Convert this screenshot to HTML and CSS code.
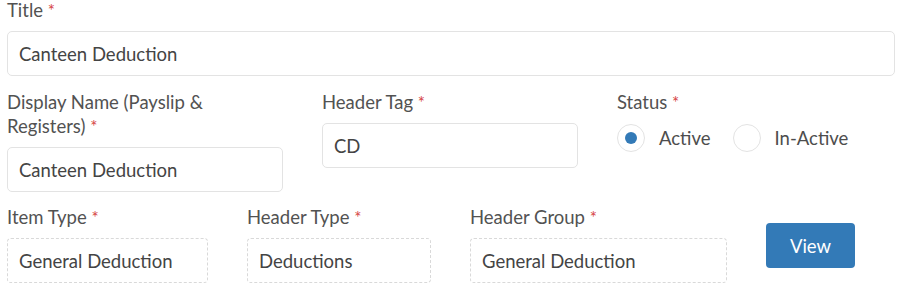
FILE: index.html
```html
<!DOCTYPE html>
<html lang="en">
<head>
    <meta charset="UTF-8">
    <title>Pay Header</title>
    <link rel="stylesheet" href="styles.css">
</head>
<body>
<form class="form">
    <div class="row">
        <div class="field field-full">
            <label class="label" for="title">Title <span class="req">*</span></label>
            <input class="input" id="title" type="text" value="Canteen Deduction">
        </div>
    </div>

    <div class="row row-two">
        <div class="field w-display">
            <label class="label" for="display-name"><span>Display Name (Payslip &amp;</span> <span>Registers)</span> <span class="req">*</span></label>
            <input class="input" id="display-name" type="text" value="Canteen Deduction">
        </div>
        <div class="field w-tag">
            <label class="label" for="header-tag">Header Tag <span class="req">*</span></label>
            <input class="input" id="header-tag" type="text" value="CD">
        </div>
        <div class="field">
            <span class="label">Status <span class="req">*</span></span>
            <div class="radios">
                <label class="radio"><span class="dot checked"></span>Active</label>
                <label class="radio"><span class="dot"></span>In-Active</label>
            </div>
        </div>
    </div>

    <div class="row row-three">
        <div class="field w-item">
            <span class="label">Item Type <span class="req">*</span></span>
            <div class="input readonly">General Deduction</div>
        </div>
        <div class="field w-htype">
            <span class="label">Header Type <span class="req">*</span></span>
            <div class="input readonly">Deductions</div>
        </div>
        <div class="field w-group">
            <span class="label">Header Group <span class="req">*</span></span>
            <div class="input readonly">General Deduction</div>
        </div>
        <button class="btn-view" type="button">View</button>
    </div>
</form>
</body>
</html>
```

FILE: styles.css
```css
body {
    margin: 0;
    background: #fff;
    font-family: Lato, "Noto Sans", sans-serif;
    color: #4d4d4d;
}

.form {
    padding: 0 8px 0 7px;
    margin-top: -2px;
}

.row {
    display: flex;
    align-items: flex-start;
}

.row-two {
    margin-top: 14px;
    gap: 39px;
}

.row-three {
    margin-top: 13px;
    gap: 39px;
}

.field {
    display: flex;
    flex-direction: column;
}

.field-full {
    width: 100%;
}

.w-display { width: 276px; }
.w-tag { width: 256px; }
.w-item { width: 201px; }
.w-htype { width: 184px; }
.w-group { width: 257px; }

.label {
    font-size: 18.5px;
    line-height: 24px;
    color: #525252;
    margin-bottom: 9px;
}

.w-display .label {
    padding-right: 40px;
}

.req {
    color: #d64545;
    font-size: 17px;
    line-height: 1;
}

.input {
    box-sizing: border-box;
    height: 45px;
    width: 100%;
    border: 1px solid #e3e3e3;
    border-radius: 5px;
    padding: 0 11px;
    font-family: inherit;
    font-size: 18.5px;
    color: #444;
    background: #fff;
    outline: none;
}

.readonly {
    display: flex;
    align-items: center;
    border: 1px dashed #d9d9d9;
    border-radius: 4px;
}

.radios {
    display: flex;
    align-items: center;
    height: 28px;
    margin-top: 1px;
}

.radio {
    display: flex;
    align-items: center;
    font-size: 18.5px;
    color: #4d4d4d;
    margin-right: 22px;
}

.dot {
    box-sizing: border-box;
    width: 28px;
    height: 28px;
    border: 1px solid #e3e3e3;
    border-radius: 50%;
    margin-right: 14px;
    display: flex;
    align-items: center;
    justify-content: center;
}

.dot.checked::after {
    content: "";
    width: 12px;
    height: 12px;
    border-radius: 50%;
    background: #337ab7;
}

.btn-view {
    margin-top: 18px;
    width: 89px;
    height: 45px;
    border: none;
    border-radius: 4px;
    background: #337ab7;
    color: #fff;
    font-family: inherit;
    font-size: 18.5px;
}
```
